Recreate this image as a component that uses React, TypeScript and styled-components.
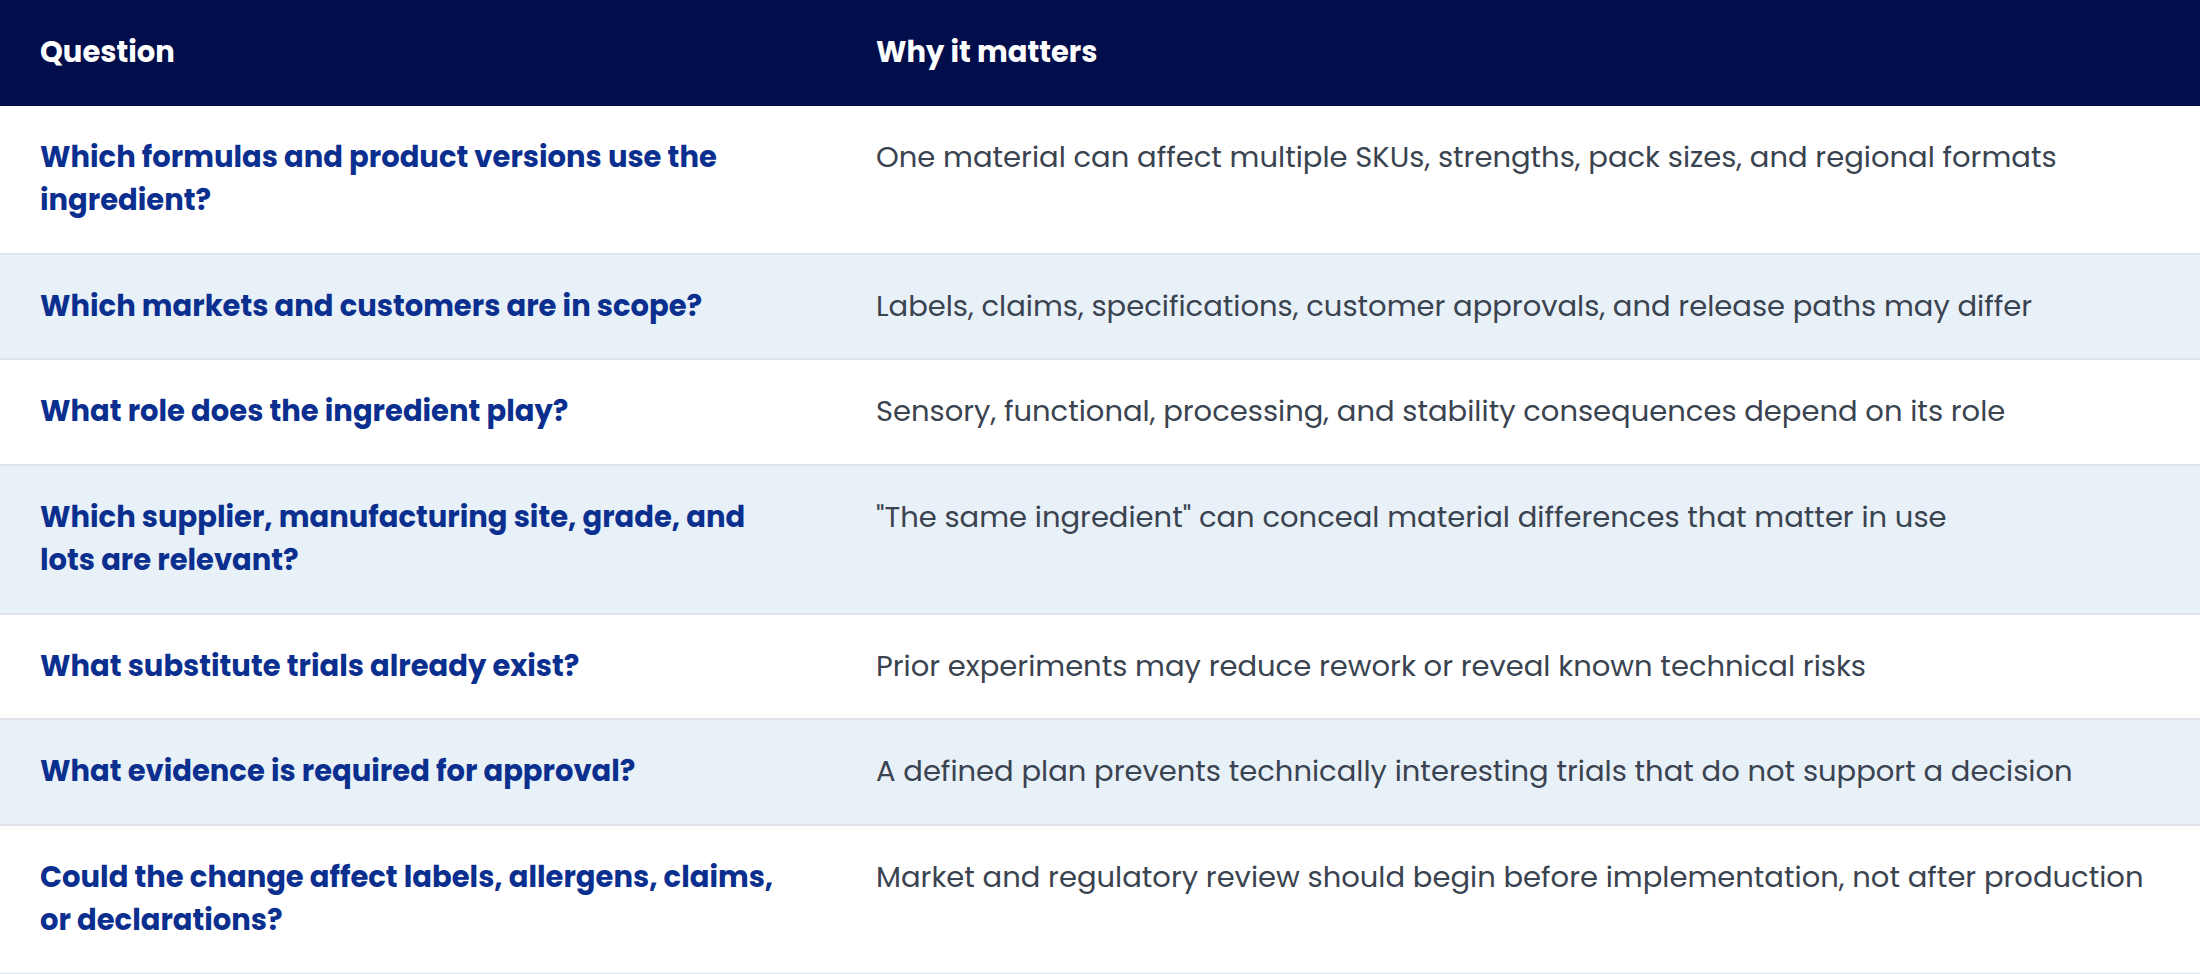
import React from "react";
import styled, { createGlobalStyle } from "styled-components";

const rows = [
  {
    q: "Which formulas and product versions use the ingredient?",
    a: "One material can affect multiple SKUs, strengths, pack sizes, and regional formats",
  },
  {
    q: "Which markets and customers are in scope?",
    a: "Labels, claims, specifications, customer approvals, and release paths may differ",
  },
  {
    q: "What role does the ingredient play?",
    a: "Sensory, functional, processing, and stability consequences depend on its role",
  },
  {
    q: "Which supplier, manufacturing site, grade, and lots are relevant?",
    a: "\"The same ingredient\" can conceal material differences that matter in use",
  },
  {
    q: "What substitute trials already exist?",
    a: "Prior experiments may reduce rework or reveal known technical risks",
  },
  {
    q: "What evidence is required for approval?",
    a: "A defined plan prevents technically interesting trials that do not support a decision",
  },
  {
    q: "Could the change affect labels, allergens, claims, or declarations?",
    a: "Market and regulatory review should begin before implementation, not after production",
  },
];

function App() {
  return (
    <>
      <GlobalStyle />
      <Table>
        <colgroup>
          <QuestionCol />
          <col />
        </colgroup>
        <thead>
          <tr>
            <HeadCell>Question</HeadCell>
            <HeadCell>Why it matters</HeadCell>
          </tr>
        </thead>
        <tbody>
          {rows.map((r, i) => (
            <Row key={i} $striped={i % 2 === 1}>
              <QuestionCell>{r.q}</QuestionCell>
              <AnswerCell>{r.a}</AnswerCell>
            </Row>
          ))}
        </tbody>
      </Table>
    </>
  );
}

const GlobalStyle = createGlobalStyle`
  body {
    margin: 0;
    background: #fff;
    font-family: "Poppins", "Inter", "Noto Sans", sans-serif;
  }
`;

const Table = styled.table`
  width: 2200px;
  border-collapse: collapse;
  table-layout: fixed;
`;

const QuestionCol = styled.col`
  width: 836px;
`;

const HeadCell = styled.th`
  background: #020e4b;
  color: #fff;
  text-align: left;
  font-size: 29px;
  font-weight: 700;
  line-height: 1.5;
  padding: 31px 50px 31px 40px;
`;

const Row = styled.tr<{ $striped: boolean }>`
  background: ${(p) => (p.$striped ? "#e8f0f8" : "#fff")};
  border-bottom: 2px solid #dfe4eb;
`;

const QuestionCell = styled.td`
  vertical-align: top;
  color: #0a2f8f;
  font-size: 29px;
  font-weight: 700;
  line-height: 1.5;
  padding: 30px 50px 30px 40px;
`;

const AnswerCell = styled.td`
  vertical-align: top;
  color: #3a4350;
  font-size: 29px;
  font-weight: 400;
  line-height: 1.5;
  padding: 30px 40px 30px 40px;
`;

export default App;
